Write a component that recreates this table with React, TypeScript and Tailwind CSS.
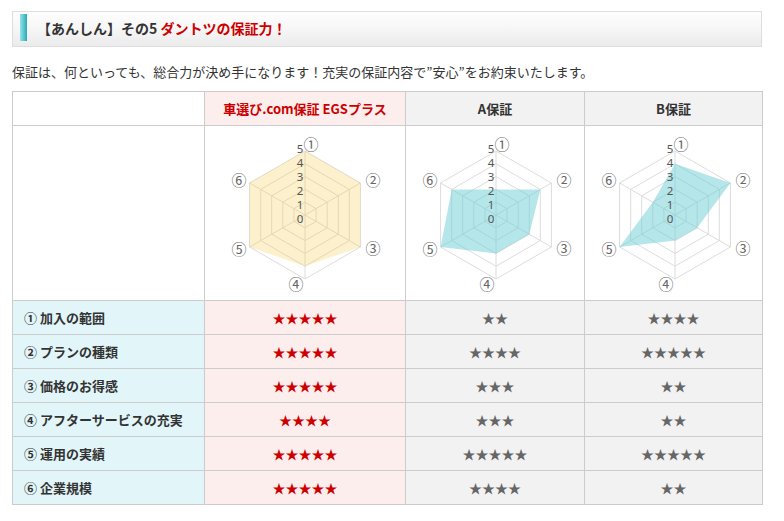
import React from 'react';

type Plan = {
  key: string;
  name: string;
  scores: number[];
  fill: string;
  opacity: number;
};

const plans: Plan[] = [
  { key: 'egs', name: '車選び.com保証 EGSプラス', scores: [5, 5, 5, 4, 5, 5], fill: 'rgb(245,205,90)', opacity: 0.3 },
  { key: 'a', name: 'A保証', scores: [2, 4, 3, 3, 5, 4], fill: 'rgb(107,205,213)', opacity: 0.5 },
  { key: 'b', name: 'B保証', scores: [4, 5, 2, 2, 5, 2], fill: 'rgb(107,205,213)', opacity: 0.5 },
];

const items = ['① 加入の範囲', '② プランの種類', '③ 価格のお得感', '④ アフターサービスの充実', '⑤ 運用の実績', '⑥ 企業規模'];

const axisLabels = ['①', '②', '③', '④', '⑤', '⑥'];
// offsets of the point labels from the centre, read off the chart
const labelOffsets = [
  [6, -72],
  [68, -36],
  [68, 32],
  [-9, 68],
  [-66, 33],
  [-66, -36],
];

const CX = 90;
const CY = 89;
const R = 64;

const point = (i: number, v: number) => {
  const a = ((-90 + 60 * i) * Math.PI) / 180;
  const r = (R * v) / 5;
  return [CX + r * Math.cos(a), CY + r * Math.sin(a)];
};

const ring = (v: number) =>
  [0, 1, 2, 3, 4, 5].map((i) => point(i, v).map((n) => n.toFixed(1)).join(',')).join(' ');

const RadarChart: React.FC<{ plan: Plan }> = ({ plan }) => {
  const shape = plan.scores.map((s, i) => point(i, s).map((n) => n.toFixed(1)).join(',')).join(' ');
  return (
    <svg width="180" height="174" viewBox="0 0 180 174" className="mx-auto block">
      {[1, 2, 3, 4, 5].map((v) => (
        <polygon key={v} points={ring(v)} fill="none" stroke="#dcdcdc" strokeWidth="1" />
      ))}
      {[0, 1, 2, 3, 4, 5].map((i) => {
        const [x, y] = point(i, 5);
        return <line key={i} x1={CX} y1={CY} x2={x} y2={y} stroke="#dcdcdc" strokeWidth="1" />;
      })}
      <polygon points={shape} fill={plan.fill} fillOpacity={plan.opacity} />
      {[0, 1, 2, 3, 4, 5].map((v) => (
        <text
          key={v}
          x={CX - 5}
          y={CY + 3 - 14 * v}
          fontSize="11.5"
          fill="#555"
          textAnchor="middle"
          dominantBaseline="central"
          fontFamily="'Noto Sans', sans-serif"
        >
          {v}
        </text>
      ))}
      {axisLabels.map((l, i) => (
        <text
          key={l}
          x={CX + labelOffsets[i][0]}
          y={CY + labelOffsets[i][1]}
          fontSize="15"
          fill="#666"
          textAnchor="middle"
          dominantBaseline="central"
          fontFamily="'Noto Sans CJK JP', sans-serif"
        >
          {l}
        </text>
      ))}
    </svg>
  );
};

const Stars: React.FC<{ n: number; red?: boolean }> = ({ n, red }) => (
  <span className={`text-[13px] leading-none ${red ? 'text-[#cc0000]' : 'text-[#666]'}`}>{'★'.repeat(n)}</span>
);

const App: React.FC = () => {
  return (
    <div className="min-h-[521px] bg-white px-[12px] pt-[11px] font-['Noto_Sans_CJK_JP','Noto_Sans',sans-serif] text-[#333]">
      <div className="flex h-[36px] w-[750px] items-start border border-[#dedede] bg-gradient-to-b from-[#fefefe] via-[#f6f6f6] to-[#ebebeb]">
        <div className="ml-[7px] mt-[2px] h-[27px] w-[7px] bg-gradient-to-r from-[#8fe6ec] to-[#22a9b6]" />
        <h2 className="ml-[10px] mt-[6px] text-[14px] font-bold leading-[20px]">
          【あんしん】その5 <span className="text-[#cc0000]">ダントツの保証力！</span>
        </h2>
      </div>

      <p className="mt-[15px] text-[13px] leading-[20px] text-[#333]">
        保証は、何といっても、総合力が決め手になります！充実の保証内容で”安心”をお約束いたします。
      </p>

      <table className="mt-[9px] w-[750px] table-fixed border-collapse text-[13px]">
        <colgroup>
          <col className="w-[192px]" />
          <col className="w-[201px]" />
          <col className="w-[179px]" />
          <col className="w-[178px]" />
        </colgroup>
        <thead>
          <tr className="h-[34px]">
            <th className="border border-[#cccccc] bg-white" />
            <th className="border border-[#cccccc] bg-[#fdeeee] font-bold text-[#cc0000]">{plans[0].name}</th>
            <th className="border border-[#cccccc] bg-[#f2f2f2] font-bold text-[#333]">{plans[1].name}</th>
            <th className="border border-[#cccccc] bg-[#f2f2f2] font-bold text-[#333]">{plans[2].name}</th>
          </tr>
        </thead>
        <tbody>
          <tr className="h-[175px]">
            <td className="border border-[#cccccc] bg-white" />
            {plans.map((p) => (
              <td key={p.key} className="border border-[#cccccc] bg-white p-0">
                <RadarChart plan={p} />
              </td>
            ))}
          </tr>
          {items.map((item, i) => (
            <tr key={item} className="h-[34px]">
              <td className="border border-[#cccccc] bg-[#e2f6f9] pl-[11px] font-bold text-[#333]">{item}</td>
              <td className="border border-[#cccccc] bg-[#fdeeee] text-center">
                <Stars n={plans[0].scores[i]} red />
              </td>
              <td className="border border-[#cccccc] bg-[#f2f2f2] text-center">
                <Stars n={plans[1].scores[i]} />
              </td>
              <td className="border border-[#cccccc] bg-[#f2f2f2] text-center">
                <Stars n={plans[2].scores[i]} />
              </td>
            </tr>
          ))}
        </tbody>
      </table>
    </div>
  );
};

export default App;
